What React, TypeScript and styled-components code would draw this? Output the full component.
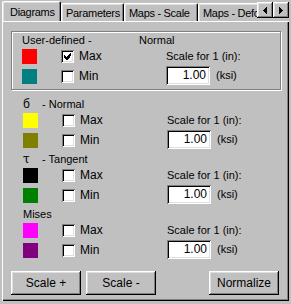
import React from "react";
import styled, {createGlobalStyle} from "styled-components";

const GlobalStyle = createGlobalStyle`
  html, body {
    margin: 0;
    padding: 0;
    background: #c0c0c0;
  }
  body {
    font-family: "Liberation Sans", Arial, sans-serif;
    font-size: 11px;
    color: #000;
  }
`;

const raised = `
  box-shadow: inset -1px -1px #000, inset 1px 1px #fff, inset -2px -2px #808080, inset 2px 2px #dfdfdf;
`;

const sunken = `
  box-shadow: inset 1px 1px #808080, inset -1px -1px #fff, inset 2px 2px #000, inset -2px -2px #dfdfdf;
`;

const Window = styled.div`
  width: 291px;
  height: 304px;
  background: #c0c0c0;
  overflow: hidden;
  line-height: 13px;
`;

const TabStrip = styled.div`
  display: flex;
  align-items: flex-start;
  height: 21px;
  padding-left: 2px;
  position: relative;
  z-index: 1;
`;

const Tabs = styled.div`
  flex: 1;
  min-width: 0;
  display: flex;
  align-items: flex-end;
  height: 21px;
  overflow: hidden;
`;

const Tab = styled.div<{ $active?: boolean; $w?: number }>`
  flex: none;
  box-sizing: border-box;
  width: ${p => (p.$w ? `${p.$w}px` : "auto")};
  height: ${p => (p.$active ? "21px" : "18px")};
  margin-bottom: ${p => (p.$active ? "-1px" : "0")};
  padding: ${p => (p.$active ? "4px 0 0 7px" : "3px 0 0 4px")};
  background: #c0c0c0;
  border-top: 1px solid #fff;
  border-left: 1px solid #fff;
  border-right: 1px solid #000;
  border-radius: 2px 2px 0 0;
  box-shadow: inset -1px 0 #808080, inset 1px 1px #dfdfdf;
  white-space: nowrap;
  overflow: hidden;
  letter-spacing: -0.3px;
`;

const Arrows = styled.div`
  flex: none;
  display: flex;
  margin: 2px 2px 0 0;
`;

const ArrowButton = styled.div`
  width: 16px;
  height: 16px;
  display: flex;
  align-items: center;
  justify-content: center;
  background: #c0c0c0;
  ${raised}
`;

const Panel = styled.div`
  box-sizing: border-box;
  width: 287px;
  height: 280px;
  margin-left: 2px;
  padding: 10px 9px 0 9px;
  box-shadow: inset 1px 1px #fff, inset -1px -1px #000, inset -2px -2px #808080;
`;

const Section = styled.div<{ $boxed?: boolean }>`
  display: grid;
  grid-template-columns: 39px 105px auto;
  grid-template-rows: 15px 20px 20px;
  padding: ${p => (p.$boxed ? "2px 10px 0 10px" : "0 12px")};
  margin-bottom: ${p => (p.$boxed ? "8px" : "0")};
  width: 270px;
  box-sizing: border-box;
  border: ${p => (p.$boxed ? "1px solid #808080" : "none")};
  box-shadow: ${p => (p.$boxed ? "1px 1px #fff, inset 1px 1px #fff" : "none")};
  height: ${p => (p.$boxed ? "59px" : "55px")};
`;

const Title = styled.div`
  grid-column: 1 / 4;
  display: flex;
  white-space: nowrap;
`;

const Lead = styled.span<{ $w: number }>`
  width: ${p => p.$w}px;
  flex: none;
`;

const Greek = styled.span<{ $serif?: boolean }>`
  font-family: ${p => (p.$serif ? `"DejaVu Serif", serif` : `"Liberation Sans", sans-serif`)};
  font-size: 12px;
`;

const Swatch = styled.div<{ $color: string }>`
  width: 15px;
  height: 15px;
  background: ${p => p.$color};
`;

const CheckRow = styled.label`
  display: flex;
  align-items: flex-start;
  gap: 5px;
  padding-top: 1px;
`;

const Box = styled.span`
  width: 13px;
  height: 13px;
  box-sizing: border-box;
  background: #fff;
  display: flex;
  align-items: center;
  justify-content: center;
  ${sunken}
`;

const CheckText = styled.span`
  font-size: 12px;
  line-height: 13px;
`;

const ScaleCol = styled.div`
  grid-column: 3;
  grid-row: 2 / 4;
  display: flex;
  flex-direction: column;
  justify-content: flex-end;
  padding-bottom: 4px;
`;

const ScaleLabel = styled.div`
  margin-bottom: 3px;
  white-space: nowrap;
`;

const InputRow = styled.div`
  display: flex;
  align-items: center;
  gap: 6px;
`;

const NumberBox = styled.div`
  width: 44px;
  height: 19px;
  box-sizing: border-box;
  background: #fff;
  text-align: right;
  padding: 3px 4px 0 0;
  font-size: 12px;
  ${sunken}
`;

const ButtonBar = styled.div`
  display: flex;
  margin-top: 8px;
  gap: 5px;
`;

const Button = styled.div<{ $push?: boolean }>`
  width: 70px;
  height: 24px;
  display: flex;
  align-items: center;
  justify-content: center;
  font-size: 12px;
  margin-left: ${p => (p.$push ? "auto" : "0")};
  margin-right: ${p => (p.$push ? "1px" : "0")};
  ${raised}
`;

const CheckMark = () => (
    <svg width="7" height="7" viewBox="0 0 7 7" shapeRendering="crispEdges">
        <path d="M6 0h1v3h-1zM5 1h1v4h-1zM4 2h1v4h-1zM3 3h1v4h-1zM2 4h1v3h-1zM1 3h1v3h-1zM0 2h1v3h-1z" fill="#000"/>
    </svg>
);

const Check: React.FC<{ label: string; checked?: boolean }> = ({label, checked}) => (
    <CheckRow>
        <Box>{checked && <CheckMark/>}</Box>
        <CheckText>{label}</CheckText>
    </CheckRow>
);

const Arrow: React.FC<{ left?: boolean }> = ({left}) => (
    <svg width="4" height="7" viewBox="0 0 4 7" shapeRendering="crispEdges">
        <path d={left ? "M0 3h1v1h-1zM1 2h1v3h-1zM2 1h1v5h-1zM3 0h1v7h-1z" : "M3 3h1v1h-1zM2 2h1v3h-1zM1 1h1v5h-1zM0 0h1v7h-1z"} fill="#000"/>
    </svg>
);

type Group = {
    title: React.ReactNode;
    colors: [string, string];
    boxed?: boolean;
    maxChecked?: boolean;
};

const groups: Group[] = [
    {title: <><Lead $w={117}>User-defined -</Lead><span>Normal</span></>, colors: ["#ff0000", "#008080"], boxed: true, maxChecked: true},
    {title: <><Lead $w={19}><Greek>б</Greek></Lead><span>- Normal</span></>, colors: ["#ffff00", "#808000"]},
    {title: <><Lead $w={19}><Greek $serif>τ</Greek></Lead><span>- Tangent</span></>, colors: ["#000000", "#008000"]},
    {title: <span>Mises</span>, colors: ["#ff00ff", "#800080"]},
];

export default function App() {
    return (
        <Window>
            <GlobalStyle/>
            <TabStrip>
                <Tabs>
                    <Tab $active $w={59}>Diagrams</Tab>
                    <Tab $w={63}>Parameters</Tab>
                    <Tab $w={74}>Maps - Scale</Tab>
                    <Tab $w={110}>Maps - Deformation</Tab>
                </Tabs>
                <Arrows>
                    <ArrowButton><Arrow left/></ArrowButton>
                    <ArrowButton><Arrow/></ArrowButton>
                </Arrows>
            </TabStrip>
            <Panel>
                {groups.map((g, i) => (
                    <Section key={i} $boxed={g.boxed}>
                        <Title>{g.title}</Title>
                        <Swatch $color={g.colors[0]}/>
                        <Check label="Max" checked={g.maxChecked}/>
                        <ScaleCol>
                            <ScaleLabel>Scale for 1 (in):</ScaleLabel>
                            <InputRow>
                                <NumberBox>1.00</NumberBox>
                                <span>(ksi)</span>
                            </InputRow>
                        </ScaleCol>
                        <Swatch $color={g.colors[1]}/>
                        <Check label="Min"/>
                    </Section>
                ))}
                <ButtonBar>
                    <Button>Scale +</Button>
                    <Button>Scale -</Button>
                    <Button $push>Normalize</Button>
                </ButtonBar>
            </Panel>
        </Window>
    );
}
